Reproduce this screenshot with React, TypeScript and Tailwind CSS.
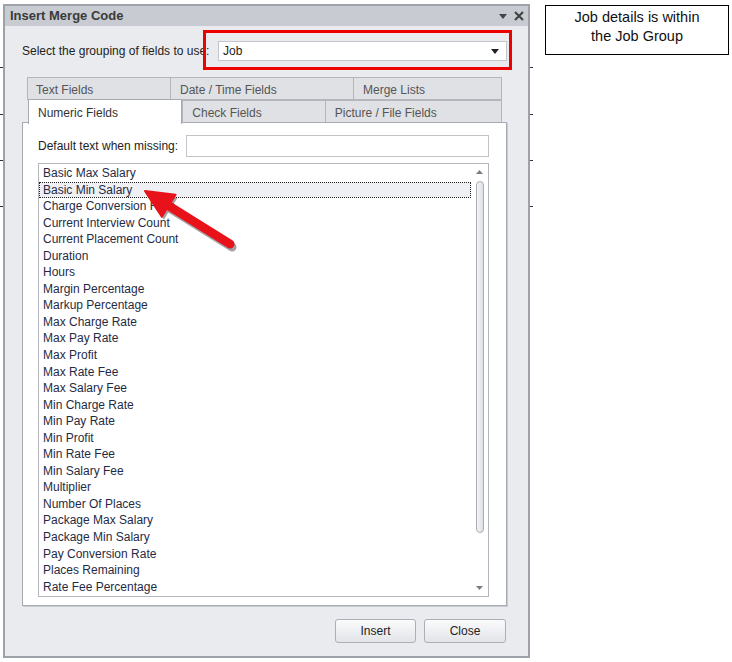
import React from 'react';

const items = [
  'Basic Max Salary',
  'Basic Min Salary',
  'Charge Conversion Rate',
  'Current Interview Count',
  'Current Placement Count',
  'Duration',
  'Hours',
  'Margin Percentage',
  'Markup Percentage',
  'Max Charge Rate',
  'Max Pay Rate',
  'Max Profit',
  'Max Rate Fee',
  'Max Salary Fee',
  'Min Charge Rate',
  'Min Pay Rate',
  'Min Profit',
  'Min Rate Fee',
  'Min Salary Fee',
  'Multiplier',
  'Number Of Places',
  'Package Max Salary',
  'Package Min Salary',
  'Pay Conversion Rate',
  'Places Remaining',
  'Rate Fee Percentage',
];

const font = { fontFamily: '"Liberation Sans", Arial, sans-serif' };

const Tab: React.FC<{ label: string; w: string; active?: boolean }> = ({ label, w, active }) => (
  <div
    className={
      active
        ? `${w} h-[25px] -mt-[1px] -mb-[1px] bg-white border border-[#a7abb1] border-b-0 pl-[9px] pt-[4px] text-[12px] text-[#333] relative z-10`
        : `${w} h-[23px] bg-[#dfe1e5] border border-[#b3b7bd] border-l-0 pl-[9px] pt-[3px] text-[12px] text-[#555]`
    }
  >
    {label}
  </div>
);

const RedArrow: React.FC = () => (
  <svg className="absolute left-[135px] top-[180px]" width="110" height="76" viewBox="0 0 110 76">
    <g transform="translate(2,3)" opacity="0.45">
      <line x1="30" y1="23.5" x2="95" y2="64" stroke="#333" strokeWidth="9" strokeLinecap="round" />
      <polygon points="10,11 26.8,36.8 40.6,14.8" fill="#333" />
    </g>
    <line x1="30" y1="23.5" x2="95" y2="64" stroke="#e8131a" strokeWidth="9" strokeLinecap="round" />
    <polygon points="10,11 26.8,36.8 40.6,14.8" fill="#e8131a" stroke="#e8131a" strokeWidth="2" strokeLinejoin="round" />
  </svg>
);

export default function App() {
  return (
    <div className="relative w-[732px] h-[662px] bg-white flex items-start overflow-hidden" style={font}>
      {/* background page ticks */}
      <div className="absolute left-0 top-[67px] w-[3px] h-px bg-[#333]" />
      <div className="absolute left-0 top-[114px] w-[3px] h-px bg-[#333]" />
      <div className="absolute left-0 top-[160px] w-[3px] h-px bg-[#333]" />
      <div className="absolute left-0 top-[206px] w-[3px] h-px bg-[#333]" />
      <div className="absolute left-[530px] top-[67px] w-[3px] h-px bg-[#333]" />
      <div className="absolute left-[530px] top-[114px] w-[3px] h-px bg-[#333]" />
      <div className="absolute left-[530px] top-[160px] w-[3px] h-px bg-[#333]" />
      <div className="absolute left-[530px] top-[206px] w-[3px] h-px bg-[#333]" />

      {/* dialog */}
      <div className="ml-[3px] mt-[4px] w-[527px] h-[654px] border-2 border-[#9da1a8] bg-[#e9ebee] flex flex-col">
        <div className="h-[20px] bg-[#c8ccd2] flex items-center justify-between pl-[5px] pr-[4px]">
          <span className="font-bold text-[13px] text-[#3a3a3a]">Insert Merge Code</span>
          <div className="flex items-center gap-[7px]">
            <svg width="8" height="5" viewBox="0 0 8 5"><polygon points="0,0 8,0 4,5" fill="#444" /></svg>
            <svg width="10" height="10" viewBox="0 0 10 10">
              <path d="M1 1 L9 9 M9 1 L1 9" stroke="#444" strokeWidth="2.2" />
            </svg>
          </div>
        </div>

        <div className="flex flex-col pl-[17px] pr-[21px]">
          <div className="flex items-center mt-[15px] h-[20px]">
            <span className="text-[12px] text-[#222] w-[196px]">Select the grouping of fields to use:</span>
            <div className="relative flex-1 h-[20px]">
              <div className="absolute -left-[15px] -top-[11px] w-[309px] h-[40px] border-[3px] border-[#ee0000]" />
              <div className="h-full bg-white border border-[#c3c6cb] flex items-center justify-between pl-[4px] pr-[7px]">
                <span className="text-[12px] text-[#222]">Job</span>
                <svg width="8" height="5" viewBox="0 0 8 5"><polygon points="0,0 8,0 4,5" fill="#222" /></svg>
              </div>
            </div>
          </div>

          <div className="mt-[16px] ml-[6px] mr-[5px] flex flex-col">
            <div className="flex ml-[-1px]">
              <div className="w-[144px] h-[23px] bg-[#dfe1e5] border border-[#b3b7bd] pl-[8px] pt-[3px] text-[12px] text-[#555]">Text Fields</div>
              <Tab label="Date / Time Fields" w="w-[183px]" />
              <Tab label="Merge Lists" w="w-[148px]" />
            </div>
            <div className="flex">
              <Tab label="Numeric Fields" w="w-[155px]" active />
              <Tab label="Check Fields" w="w-[144px] !border-l" />
              <Tab label="Picture / File Fields" w="w-[177px]" />
            </div>
          </div>

          {/* panel */}
          <div className="-mt-[1px] h-[484px] bg-white border border-[#a7abb1] shadow-[1px_1px_0_#c9ccd1] pl-[15px] pr-[17px] pt-[12px] flex flex-col">
            <div className="flex items-center h-[22px]">
              <span className="text-[12px] text-[#222] w-[148px]">Default text when missing:</span>
              <div className="flex-1 h-[22px] border border-[#c0c3c8] bg-white" />
            </div>
            <div className="mt-[6px] h-[434px] border border-[#b4b8be] flex">
              <div className="flex-1 pt-[1px] pl-[1px]">
                {items.map((it) =>
                  it === 'Basic Min Salary' ? (
                    <div
                      key={it}
                      className="h-[16.56px] leading-[15px] pl-[3px] text-[12px] text-[#1f2b45] bg-[#eef0f3] border border-dotted border-[#222] -ml-[1px]"
                    >
                      {it}
                    </div>
                  ) : (
                    <div key={it} className="h-[16.56px] leading-[16.56px] pl-[3px] text-[12px] text-[#1f2b45]">
                      {it}
                    </div>
                  )
                )}
              </div>
              <div className="w-[17px] flex flex-col items-center pt-[6px] pb-[6px]">
                <svg width="7" height="4" viewBox="0 0 7 4"><polygon points="0,4 7,4 3.5,0" fill="#7a7e84" /></svg>
                <div className="mt-[7px] w-[8px] h-[352px] rounded-full border border-[#a9adb3] bg-gradient-to-r from-[#f4f5f7] to-[#dcdfe3]" />
                <div className="flex-1" />
                <svg width="7" height="4" viewBox="0 0 7 4"><polygon points="0,0 7,0 3.5,4" fill="#7a7e84" /></svg>
              </div>
            </div>
          </div>

          <div className="mt-[13px] flex justify-end gap-[8px] mr-[1px]">
            <button className="w-[81px] h-[24px] rounded-[3px] border border-[#acb0b6] bg-gradient-to-b from-[#fbfbfc] to-[#e2e4e8] text-[12px] text-[#222]">Insert</button>
            <button className="w-[82px] h-[24px] rounded-[3px] border border-[#acb0b6] bg-gradient-to-b from-[#fbfbfc] to-[#e2e4e8] text-[12px] text-[#222]">Close</button>
          </div>
        </div>
      </div>

      {/* annotation */}
      <div className="ml-[15px] mt-[5px] w-[184px] h-[50px] border border-black flex flex-col items-center pt-[2px] text-[14.5px] leading-[19px] text-[#111]">
        <span>Job details is within</span>
        <span>the Job Group</span>
      </div>

      <RedArrow />
    </div>
  );
}
